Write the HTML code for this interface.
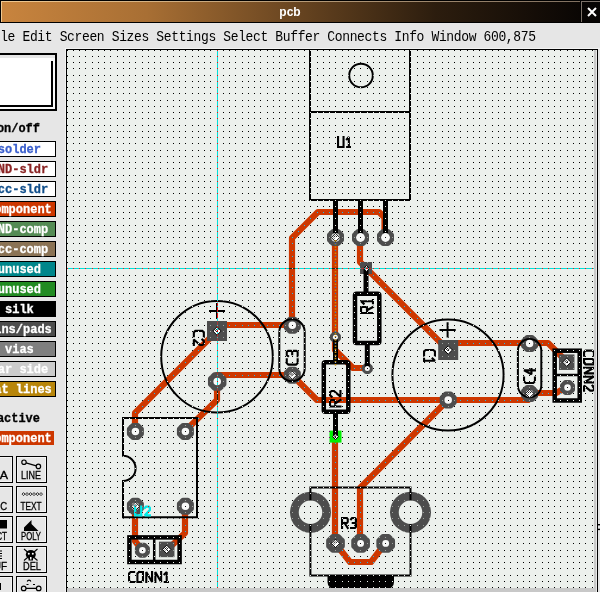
<!DOCTYPE html><html><head><meta charset="utf-8"><style>
html,body{margin:0;padding:0;width:600px;height:592px;overflow:hidden;background:#e6e6e6}
svg{position:absolute;left:0;top:0;display:block;will-change:transform}
.mono{font-family:"Liberation Mono",monospace}
.lbl{font-family:"Liberation Mono",monospace;font-weight:bold;font-size:12px;stroke:currentColor;stroke-width:0.3}
</style></head><body>
<svg width="600" height="592" viewBox="0 0 600 592">
<defs>
<linearGradient id="tg" x1="0" y1="0" x2="1" y2="0"><stop offset="0" stop-color="#c8843e"/><stop offset="0.25" stop-color="#a86f34"/><stop offset="0.5" stop-color="#6a4621"/><stop offset="0.75" stop-color="#2c1d0e"/><stop offset="1" stop-color="#0a0604"/></linearGradient>
<linearGradient id="th" x1="0" y1="0" x2="1" y2="0"><stop offset="0" stop-color="#f0c890"/><stop offset="1" stop-color="#807060"/></linearGradient>
<pattern id="grid" x="73" y="56" width="25" height="25" patternUnits="userSpaceOnUse"><rect fill="#ecf0ec" x="0" y="0" width="1" height="1"/><rect fill="#ecf0ec" x="0" y="6" width="1" height="1"/><rect fill="#ecf0ec" x="0" y="12" width="1" height="1"/><rect fill="#ecf0ec" x="0" y="19" width="1" height="1"/><rect fill="#ecf0ec" x="6" y="0" width="1" height="1"/><rect fill="#ecf0ec" x="6" y="6" width="1" height="1"/><rect fill="#ecf0ec" x="6" y="12" width="1" height="1"/><rect fill="#ecf0ec" x="6" y="19" width="1" height="1"/><rect fill="#ecf0ec" x="12" y="0" width="1" height="1"/><rect fill="#ecf0ec" x="12" y="6" width="1" height="1"/><rect fill="#ecf0ec" x="12" y="12" width="1" height="1"/><rect fill="#ecf0ec" x="12" y="19" width="1" height="1"/><rect fill="#ecf0ec" x="19" y="0" width="1" height="1"/><rect fill="#ecf0ec" x="19" y="6" width="1" height="1"/><rect fill="#ecf0ec" x="19" y="12" width="1" height="1"/><rect fill="#ecf0ec" x="19" y="19" width="1" height="1"/></pattern>
<clipPath id="cc"><rect x="67" y="50" width="527" height="538"/></clipPath>
</defs>
<rect x="0" y="0" width="600" height="23" fill="#000"/>
<rect x="1" y="1" width="579" height="21" fill="url(#th)"/>
<rect x="2" y="2" width="578" height="20" fill="url(#tg)"/>
<rect x="581" y="1" width="19" height="21" fill="#7a7068"/>
<rect x="582" y="2" width="18" height="20" fill="#060403"/>
<path d="M588 8L596 16M596 8L588 16" stroke="#fff" stroke-width="2"/>
<text x="290" y="16" text-anchor="middle" fill="#fff" font-family="Liberation Sans" font-weight="bold" font-size="12">pcb</text>
<text class="mono" transform="translate(0 40.6) scale(1 1.1)" x="-14.7" y="0" font-size="13" letter-spacing="-0.36" fill="#000" xml:space="preserve">File Edit Screen Sizes Settings Select Buffer Connects Info Window 600,875</text>
<rect x="-10" y="53" width="67" height="58" fill="#000"/>
<rect x="-10" y="55" width="65" height="54" fill="#e6e6e6"/>
<rect x="-10" y="58" width="65" height="51" fill="#fafafa"/>
<rect x="-10" y="61" width="63" height="46" fill="#000"/>
<rect x="-10" y="58" width="61" height="47" fill="#fff"/>
<text class="lbl" x="18.4" y="132" text-anchor="middle" fill="#000" color="#000" textLength="43" lengthAdjust="spacingAndGlyphs">on/off</text>
<rect x="-10" y="141" width="66" height="16" fill="#000"/>
<rect x="-10" y="142" width="65" height="14" fill="#fff"/>
<text class="lbl" x="19.4" y="152.7" text-anchor="middle" fill="#3a5fcd" color="#3a5fcd" xml:space="preserve" textLength="43.2" lengthAdjust="spacingAndGlyphs">solder</text>
<rect x="-10" y="161" width="66" height="16" fill="#000"/>
<rect x="-10" y="162" width="65" height="14" fill="#fff"/>
<text class="lbl" x="19.4" y="172.7" text-anchor="middle" fill="#8b2323" color="#8b2323" xml:space="preserve" textLength="57.6" lengthAdjust="spacingAndGlyphs">GND-sldr</text>
<rect x="-10" y="181" width="66" height="16" fill="#000"/>
<rect x="-10" y="182" width="65" height="14" fill="#fff"/>
<text class="lbl" x="19.4" y="192.7" text-anchor="middle" fill="#104e8b" color="#104e8b" xml:space="preserve" textLength="57.6" lengthAdjust="spacingAndGlyphs">Vcc-sldr</text>
<rect x="-10" y="201" width="66" height="16" fill="#000"/>
<rect x="-10" y="202" width="65" height="14" fill="#cd3700"/>
<text class="lbl" x="19.4" y="212.7" text-anchor="middle" fill="#fff" color="#fff" xml:space="preserve" textLength="64.8" lengthAdjust="spacingAndGlyphs">component</text>
<rect x="-10" y="221" width="66" height="16" fill="#000"/>
<rect x="-10" y="222" width="65" height="14" fill="#548b54"/>
<text class="lbl" x="19.4" y="232.7" text-anchor="middle" fill="#fff" color="#fff" xml:space="preserve" textLength="57.6" lengthAdjust="spacingAndGlyphs">GND-comp</text>
<rect x="-10" y="241" width="66" height="16" fill="#000"/>
<rect x="-10" y="242" width="65" height="14" fill="#8b7355"/>
<text class="lbl" x="19.4" y="252.7" text-anchor="middle" fill="#fff" color="#fff" xml:space="preserve" textLength="57.6" lengthAdjust="spacingAndGlyphs">Vcc-comp</text>
<rect x="-10" y="261" width="66" height="16" fill="#000"/>
<rect x="-10" y="262" width="65" height="14" fill="#00868b"/>
<text class="lbl" x="19.4" y="272.7" text-anchor="middle" fill="#fff" color="#fff" xml:space="preserve" textLength="43.2" lengthAdjust="spacingAndGlyphs">unused</text>
<rect x="-10" y="281" width="66" height="16" fill="#000"/>
<rect x="-10" y="282" width="65" height="14" fill="#228b22"/>
<text class="lbl" x="19.4" y="292.7" text-anchor="middle" fill="#fff" color="#fff" xml:space="preserve" textLength="43.2" lengthAdjust="spacingAndGlyphs">unused</text>
<rect x="-10" y="301" width="66" height="16" fill="#000"/>
<rect x="-10" y="302" width="65" height="14" fill="#000"/>
<text class="lbl" x="19.4" y="312.7" text-anchor="middle" fill="#fff" color="#fff" xml:space="preserve" textLength="28.8" lengthAdjust="spacingAndGlyphs">silk</text>
<rect x="-10" y="321" width="66" height="16" fill="#000"/>
<rect x="-10" y="322" width="65" height="14" fill="#4d4d4d"/>
<text class="lbl" x="19.4" y="332.7" text-anchor="middle" fill="#fff" color="#fff" xml:space="preserve" textLength="64.8" lengthAdjust="spacingAndGlyphs">pins/pads</text>
<rect x="-10" y="341" width="66" height="16" fill="#000"/>
<rect x="-10" y="342" width="65" height="14" fill="#7f7f7f"/>
<text class="lbl" x="19.4" y="352.7" text-anchor="middle" fill="#fff" color="#fff" xml:space="preserve" textLength="28.8" lengthAdjust="spacingAndGlyphs">vias</text>
<rect x="-10" y="361" width="66" height="16" fill="#000"/>
<rect x="-10" y="362" width="65" height="14" fill="#cccccc"/>
<text class="lbl" x="19.4" y="372.7" text-anchor="middle" fill="#fff" color="#fff" xml:space="preserve" textLength="57.6" lengthAdjust="spacingAndGlyphs">far side</text>
<rect x="-10" y="381" width="66" height="16" fill="#000"/>
<rect x="-10" y="382" width="65" height="14" fill="#b8860b"/>
<text class="lbl" x="19.4" y="392.7" text-anchor="middle" fill="#fff" color="#fff" xml:space="preserve" textLength="64.8" lengthAdjust="spacingAndGlyphs">rat lines</text>
<text class="lbl" x="18.4" y="422" text-anchor="middle" fill="#000" color="#000" textLength="43" lengthAdjust="spacingAndGlyphs">active</text>
<rect x="-10" y="431" width="64" height="14" fill="#cd3700"/>
<text class="lbl" x="19.4" y="442" text-anchor="middle" fill="#fff" color="#fff" textLength="64.8" lengthAdjust="spacingAndGlyphs">component</text>
<rect x="-18" y="456" width="31" height="27" fill="#000"/>
<rect x="-17" y="457" width="29" height="25" fill="#f4f4f4"/>
<rect x="-16" y="458" width="27" height="23" fill="#e6e6e6"/>
<rect x="16" y="456" width="31" height="27" fill="#000"/>
<rect x="17" y="457" width="29" height="25" fill="#f4f4f4"/>
<rect x="18" y="458" width="27" height="23" fill="#e6e6e6"/>
<rect x="-18" y="486" width="31" height="27" fill="#000"/>
<rect x="-17" y="487" width="29" height="25" fill="#f4f4f4"/>
<rect x="-16" y="488" width="27" height="23" fill="#e6e6e6"/>
<rect x="16" y="486" width="31" height="27" fill="#000"/>
<rect x="17" y="487" width="29" height="25" fill="#f4f4f4"/>
<rect x="18" y="488" width="27" height="23" fill="#e6e6e6"/>
<rect x="-18" y="516" width="31" height="27" fill="#000"/>
<rect x="-17" y="517" width="29" height="25" fill="#f4f4f4"/>
<rect x="-16" y="518" width="27" height="23" fill="#e6e6e6"/>
<rect x="16" y="516" width="31" height="27" fill="#000"/>
<rect x="17" y="517" width="29" height="25" fill="#f4f4f4"/>
<rect x="18" y="518" width="27" height="23" fill="#e6e6e6"/>
<rect x="-18" y="546" width="31" height="27" fill="#000"/>
<rect x="-17" y="547" width="29" height="25" fill="#f4f4f4"/>
<rect x="-16" y="548" width="27" height="23" fill="#e6e6e6"/>
<rect x="16" y="546" width="31" height="27" fill="#000"/>
<rect x="17" y="547" width="29" height="25" fill="#f4f4f4"/>
<rect x="18" y="548" width="27" height="23" fill="#e6e6e6"/>
<rect x="-18" y="576" width="31" height="27" fill="#000"/>
<rect x="-17" y="577" width="29" height="25" fill="#f4f4f4"/>
<rect x="-16" y="578" width="27" height="23" fill="#e6e6e6"/>
<rect x="16" y="576" width="31" height="27" fill="#000"/>
<rect x="17" y="577" width="29" height="25" fill="#f4f4f4"/>
<rect x="18" y="578" width="27" height="23" fill="#e6e6e6"/>
<text x="31" y="479" font-family="Liberation Sans" font-size="10.6" fill="#000" stroke="#000" stroke-width="0.3" text-anchor="middle" textLength="20" lengthAdjust="spacingAndGlyphs">LINE</text>
<text x="31" y="510" font-family="Liberation Sans" font-size="10.6" fill="#000" stroke="#000" stroke-width="0.3" text-anchor="middle" textLength="21" lengthAdjust="spacingAndGlyphs">TEXT</text>
<text x="31" y="540" font-family="Liberation Sans" font-size="10.6" fill="#000" stroke="#000" stroke-width="0.3" text-anchor="middle" textLength="20" lengthAdjust="spacingAndGlyphs">POLY</text>
<text x="32" y="570" font-family="Liberation Sans" font-size="10.6" fill="#000" stroke="#000" stroke-width="0.3" text-anchor="middle" textLength="18" lengthAdjust="spacingAndGlyphs">DEL</text>
<text x="-2" y="479" font-family="Liberation Sans" font-size="10.6" fill="#000" stroke="#000" stroke-width="0.3" text-anchor="middle" textLength="20" lengthAdjust="spacingAndGlyphs">VIA</text>
<text x="-3" y="510" font-family="Liberation Sans" font-size="10.6" fill="#000" stroke="#000" stroke-width="0.3" text-anchor="middle" textLength="20" lengthAdjust="spacingAndGlyphs">ARC</text>
<text x="-4" y="540" font-family="Liberation Sans" font-size="10.6" fill="#000" stroke="#000" stroke-width="0.3" text-anchor="middle" textLength="22" lengthAdjust="spacingAndGlyphs">RECT</text>
<text x="-3" y="570" font-family="Liberation Sans" font-size="10.6" fill="#000" stroke="#000" stroke-width="0.3" text-anchor="middle" textLength="20" lengthAdjust="spacingAndGlyphs">BUF</text>
<g fill="none" stroke="#000" stroke-width="1.2"><circle cx="24" cy="462.2" r="2.2"/><circle cx="38.4" cy="466.4" r="2.2"/><path d="M26 462.8L36.3 465.8"/></g>
<path d="M23.5 492.6l1.5 1.5l-1.5 1.5l-1.5-1.5z" fill="none" stroke="#000" stroke-width="0.8"/>
<path d="M27.0 492.6l1.5 1.5l-1.5 1.5l-1.5-1.5z" fill="none" stroke="#000" stroke-width="0.8"/>
<path d="M30.5 492.6l1.5 1.5l-1.5 1.5l-1.5-1.5z" fill="none" stroke="#000" stroke-width="0.8"/>
<path d="M34.0 492.6l1.5 1.5l-1.5 1.5l-1.5-1.5z" fill="none" stroke="#000" stroke-width="0.8"/>
<path d="M37.5 492.6l1.5 1.5l-1.5 1.5l-1.5-1.5z" fill="none" stroke="#000" stroke-width="0.8"/>
<path d="M41.0 492.6l1.5 1.5l-1.5 1.5l-1.5-1.5z" fill="none" stroke="#000" stroke-width="0.8"/>
<path d="M24 531V527.5L31.5 520V524L38.5 531Z" fill="#000"/>
<rect x="-4" y="520" width="11" height="8.5" fill="#000"/>
<g stroke="#000" stroke-width="1.1"><path d="M24 549L37.5 560.5M37.5 549L24 560.5"/></g>
<ellipse cx="30.8" cy="554.5" rx="5" ry="4.5" fill="#000"/><rect x="28.5" y="556" width="4.5" height="4.5" fill="#000"/>
<circle cx="28.8" cy="553.8" r="1" fill="#fff"/><circle cx="32.8" cy="553.8" r="1" fill="#fff"/><rect x="30" y="557" width="1.5" height="2.5" fill="#fff"/>
<g fill="none" stroke="#000" stroke-width="1.2"><circle cx="23.7" cy="588.4" r="2.3"/><circle cx="38.7" cy="588.4" r="2.3"/><path d="M26 588.4H36.4M26.5 584.5h2M33 584.5h2"/><path d="M27.3 581.5a1.8 1.8 0 0 1 3.5 0"/></g>
<rect x="-2" y="583" width="3" height="7" fill="#000"/>
<g stroke="#000" stroke-width="1"><path d="M-3 551h5M-3 553.5h5M-3 556h5M-3 558.5h5"/></g>
<rect x="65" y="48" width="535" height="544" fill="#f3f3f3"/>
<rect x="66" y="49" width="532" height="543" fill="#000"/>
<rect x="67" y="50" width="530" height="542" fill="#c8c8c8"/>
<rect x="67" y="50" width="527" height="538" fill="#ecf0ec"/>
<rect x="596" y="50" width="1" height="542" fill="#e8e8e8"/>
<rect x="598" y="49" width="2" height="543" fill="#e6e6e6"/>
<g clip-path="url(#cc)">
<rect x="67" y="50" width="527" height="538" fill="#ecf0ec"/>
<g fill="none" stroke="#cd3700" stroke-width="6.2" stroke-linecap="round" stroke-linejoin="round">
<path d="M292 325V238L318 212H379L384.5 217.5V238M335 238V350L353 368H367M360 238V262L366 268M366 268L448 350M448 343H548L567 362M217 325H292M217 331L135 413V431M217 381V400L185 431M217 375H292M292 375L317 400H528M529 393H556L567 387M448 400L360 488V543M335 437V543M335 543L350 562H371L385.5 543M135 506V541L142 550M185 506V533L167 550"/>
</g>
<path fill="#4d4d4d" stroke="#4d4d4d" stroke-width="5" stroke-linejoin="round" d="M341.50 239.99L337.99 243.50L333.01 243.50L329.50 239.99L329.50 235.01L333.01 231.50L337.99 231.50L341.50 235.01ZM366.50 239.99L362.99 243.50L358.01 243.50L354.50 239.99L354.50 235.01L358.01 231.50L362.99 231.50L366.50 235.01ZM391.50 239.99L387.99 243.50L383.01 243.50L379.50 239.99L379.50 235.01L383.01 231.50L387.99 231.50L391.50 235.01ZM298.30 327.79L294.79 331.30L289.81 331.30L286.30 327.79L286.30 322.81L289.81 319.30L294.79 319.30L298.30 322.81ZM298.30 377.79L294.79 381.30L289.81 381.30L286.30 377.79L286.30 372.81L289.81 369.30L294.79 369.30L298.30 372.81ZM535.60 346.09L532.09 349.60L527.11 349.60L523.60 346.09L523.60 341.11L527.11 337.60L532.09 337.60L535.60 341.11ZM535.60 395.99L532.09 399.50L527.11 399.50L523.60 395.99L523.60 391.01L527.11 387.50L532.09 387.50L535.60 391.01ZM141.40 433.99L137.89 437.50L132.91 437.50L129.40 433.99L129.40 429.01L132.91 425.50L137.89 425.50L141.40 429.01ZM191.40 433.99L187.89 437.50L182.91 437.50L179.40 433.99L179.40 429.01L182.91 425.50L187.89 425.50L191.40 429.01ZM141.40 508.79L137.89 512.30L132.91 512.30L129.40 508.79L129.40 503.81L132.91 500.30L137.89 500.30L141.40 503.81ZM191.40 508.79L187.89 512.30L182.91 512.30L179.40 508.79L179.40 503.81L182.91 500.30L187.89 500.30L191.40 503.81ZM454.20 402.49L450.69 406.00L445.71 406.00L442.20 402.49L442.20 397.51L445.71 394.00L450.69 394.00L454.20 397.51ZM223.95 384.30L220.00 388.25L214.40 388.25L210.45 384.30L210.45 378.70L214.40 374.75L220.00 374.75L223.95 378.70ZM342.35 546.24L338.34 550.25L332.66 550.25L328.65 546.24L328.65 540.56L332.66 536.55L338.34 536.55L342.35 540.56ZM367.45 546.24L363.44 550.25L357.76 550.25L353.75 546.24L353.75 540.56L357.76 536.55L363.44 536.55L367.45 540.56ZM392.55 546.24L388.54 550.25L382.86 550.25L378.85 546.24L378.85 540.56L382.86 536.55L388.54 536.55L392.55 540.56ZM147.40 552.37L144.47 555.30L140.33 555.30L137.40 552.37L137.40 548.23L140.33 545.30L144.47 545.30L147.40 548.23ZM572.50 389.67L569.57 392.60L565.43 392.60L562.50 389.67L562.50 385.53L565.43 382.60L569.57 382.60L572.50 385.53ZM338.40 338.44L336.64 340.20L334.16 340.20L332.40 338.44L332.40 335.96L334.16 334.20L336.64 334.20L338.40 335.96ZM370.30 369.64L368.54 371.40L366.06 371.40L364.30 369.64L364.30 367.16L366.06 365.40L368.54 365.40L370.30 367.16Z"/>
<circle cx="310.50" cy="512.30" r="20.50" fill="#4d4d4d"/>
<circle cx="410.50" cy="512.30" r="20.50" fill="#4d4d4d"/>
<rect x="207.00" y="321.00" width="20.00" height="20.00" fill="#4d4d4d"/>
<rect x="438.20" y="340.00" width="20.00" height="20.00" fill="#4d4d4d"/>
<rect x="360.00" y="262.00" width="12.00" height="12.00" fill="#4d4d4d"/>
<rect x="329.50" y="430.60" width="12.00" height="12.00" fill="#00f000"/>
<rect x="158.95" y="541.65" width="15.50" height="15.50" fill="#4d4d4d"/>
<rect x="558.95" y="354.45" width="15.50" height="15.50" fill="#4d4d4d"/>
<g fill="none" stroke="#000" stroke-width="2.00">
<path d="M310 40V200H410V40M310 112H410"/>
<circle cx="361" cy="75.5" r="11.8"/>
<path d="M279.3 332A12.7 12.7 0 0 1 304.7 332V368.5A12.7 12.7 0 0 1 279.3 368.5Z"/>
<path d="M517.9 350.6A11.7 11.7 0 0 1 541.3 350.6V385.6A11.7 11.7 0 0 1 517.9 385.6Z"/>
<circle cx="217" cy="356.7" r="55.8"/>
<circle cx="448" cy="375" r="55.6"/>
<path d="M123 418H197V517.3H123V481A12.6 12.6 0 0 0 123 455.8Z"/>
<path d="M310.4 487.5H410.5V575.5H310.4Z"/>
<path d="M217 303V319M209 311H225M447.6 322.3V337.5M439.5 330H455.7"/>
</g>
<g stroke="#000" stroke-width="5">
<path d="M335.5 200V238M360.5 200V238M385.5 200V238M366 268V292M367.3 343V368M335.5 337V362M335.5 412V437"/>
</g>
<g fill="none" stroke="#000" stroke-width="4.5">
<rect x="355" y="293.8" width="24.3" height="49.3" rx="1.5"/>
<rect x="323.8" y="362.3" width="24.5" height="49.5" rx="1.5"/>
<rect x="129.4" y="537.4" width="50.2" height="24.6"/>
<rect x="554.7" y="350.7" width="25" height="49.8"/>
</g>
<path d="M154.2 537V562M554 375H581" stroke="#000" stroke-width="2.5"/>
<path d="M327.5 575H394V582A7 7 0 0 1 387 589H334.5A7 7 0 0 1 327.5 582Z" fill="#000"/>
<path transform="translate(344.00 142.00)" d="M-5.95 -4.95L-5.95 4.95L-0.46 4.95L-0.46 -4.95M2.84 -2.77L4.86 -4.95L4.86 4.95M3.15 4.95L5.95 4.95" fill="none" stroke="#000" stroke-width="2.10" stroke-linecap="square" stroke-linejoin="miter" stroke-miterlimit="1.6"/>
<path transform="translate(349.00 523.00)" d="M-6.95 4.95L-6.95 -4.95L-2.11 -4.95L-1.25 -3.76L-1.25 -1.19L-2.11 0.00L-6.95 0.00M-4.38 0.00L-1.25 4.95M2.05 -3.76L3.03 -4.95L5.97 -4.95L6.95 -3.76L6.95 -0.99L5.97 0.00L3.76 0.00M5.97 0.00L6.95 0.99L6.95 3.76L5.97 4.95L2.05 4.95" fill="none" stroke="#000" stroke-width="2.10" stroke-linecap="square" stroke-linejoin="miter" stroke-miterlimit="1.6"/>
<path transform="translate(148.50 577.00)" d="M-14.39 -4.95L-17.93 -4.95L-19.45 -3.46L-19.45 3.47L-17.93 4.95L-14.39 4.95M-9.42 -4.95L-5.52 -4.95L-5.52 3.47L-7.19 4.95L-11.09 4.95L-11.09 -3.46L-9.42 -4.95M-2.22 4.95L-2.22 -4.95L3.55 4.95L3.55 -4.95M6.85 4.95L6.85 -4.95L12.63 4.95L12.63 -4.95M15.93 -2.77L18.22 -4.95L18.22 4.95M16.28 4.95L19.45 4.95" fill="none" stroke="#000" stroke-width="2.10" stroke-linecap="square" stroke-linejoin="miter" stroke-miterlimit="1.6"/>
<path transform="translate(292.20 357.75) rotate(-90)" d="M-1.65 -5.45L-5.32 -5.45L-6.90 -3.82L-6.90 3.82L-5.32 5.45L-1.65 5.45M1.65 -4.14L2.70 -5.45L5.85 -5.45L6.90 -4.14L6.90 -1.09L5.85 0.00L3.49 0.00M5.85 0.00L6.90 1.09L6.90 4.14L5.85 5.45L1.65 5.45" fill="none" stroke="#000" stroke-width="2.10" stroke-linecap="square" stroke-linejoin="miter" stroke-miterlimit="1.6"/>
<path transform="translate(198.85 337.90) rotate(90)" d="M-1.65 -5.00L-5.43 -5.00L-7.05 -3.50L-7.05 3.50L-5.43 5.00L-1.65 5.00M1.65 -3.50L3.00 -5.00L5.97 -5.00L7.05 -3.50L7.05 -1.20L1.65 5.00L7.05 5.00" fill="none" stroke="#000" stroke-width="2.10" stroke-linecap="square" stroke-linejoin="miter" stroke-miterlimit="1.6"/>
<path transform="translate(367.00 306.50) rotate(-90)" d="M-6.45 5.95L-6.45 -5.95L-1.36 -5.95L-0.46 -4.52L-0.46 -1.43L-1.36 0.00L-6.45 0.00M-3.75 0.00L-0.46 5.95M2.84 -3.33L5.19 -5.95L5.19 5.95M3.20 5.95L6.45 5.95" fill="none" stroke="#000" stroke-width="2.10" stroke-linecap="square" stroke-linejoin="miter" stroke-miterlimit="1.6"/>
<path transform="translate(335.25 398.75) rotate(-90)" d="M-7.70 5.20L-7.70 -5.20L-2.18 -5.20L-1.21 -3.95L-1.21 -1.25L-2.18 0.00L-7.70 0.00M-4.78 0.00L-1.21 5.20M2.09 -3.64L3.49 -5.20L6.58 -5.20L7.70 -3.64L7.70 -1.25L2.09 5.20L7.70 5.20" fill="none" stroke="#000" stroke-width="2.10" stroke-linecap="square" stroke-linejoin="miter" stroke-miterlimit="1.6"/>
<path transform="translate(429.50 356.00) rotate(90)" d="M-0.88 -5.45L-4.43 -5.45L-5.95 -3.82L-5.95 3.82L-4.43 5.45L-0.88 5.45M2.42 -3.05L4.71 -5.45L4.71 5.45M2.77 5.45L5.95 5.45" fill="none" stroke="#000" stroke-width="2.10" stroke-linecap="square" stroke-linejoin="miter" stroke-miterlimit="1.6"/>
<path transform="translate(529.50 376.00) rotate(-90)" d="M-1.65 -5.45L-5.36 -5.45L-6.95 -3.82L-6.95 3.82L-5.36 5.45L-1.65 5.45M5.62 5.45L5.62 -5.45L1.65 1.96L6.95 1.96" fill="none" stroke="#000" stroke-width="2.10" stroke-linecap="square" stroke-linejoin="miter" stroke-miterlimit="1.6"/>
<path transform="translate(589.00 370.65) rotate(90)" d="M-15.02 -4.95L-18.51 -4.95L-20.00 -3.46L-20.00 3.47L-18.51 4.95L-15.02 4.95M-10.08 -4.95L-6.24 -4.95L-6.24 3.47L-7.89 4.95L-11.72 4.95L-11.72 -3.46L-10.08 -4.95M-2.94 4.95L-2.94 -4.95L2.74 4.95L2.74 -4.95M6.04 4.95L6.04 -4.95L11.72 4.95L11.72 -4.95M15.02 -3.46L16.27 -4.95L19.00 -4.95L20.00 -3.46L20.00 -1.19L15.02 4.95L20.00 4.95" fill="none" stroke="#000" stroke-width="2.10" stroke-linecap="square" stroke-linejoin="miter" stroke-miterlimit="1.6"/>
<circle cx="335.50" cy="237.50" r="4.40" fill="#f8f9f8"/>
<circle cx="360.50" cy="237.50" r="4.40" fill="#f8f9f8"/>
<circle cx="385.50" cy="237.50" r="4.40" fill="#f8f9f8"/>
<circle cx="292.30" cy="325.30" r="3.75" fill="#f8f9f8"/>
<circle cx="292.30" cy="375.30" r="3.75" fill="#f8f9f8"/>
<circle cx="529.60" cy="343.60" r="3.75" fill="#f8f9f8"/>
<circle cx="529.60" cy="393.50" r="3.75" fill="#f8f9f8"/>
<circle cx="135.40" cy="431.50" r="3.75" fill="#f8f9f8"/>
<circle cx="185.40" cy="431.50" r="3.75" fill="#f8f9f8"/>
<circle cx="135.40" cy="506.30" r="3.75" fill="#f8f9f8"/>
<circle cx="185.40" cy="506.30" r="3.75" fill="#f8f9f8"/>
<circle cx="448.20" cy="400.00" r="3.75" fill="#f8f9f8"/>
<circle cx="217.20" cy="381.50" r="3.80" fill="#f8f9f8"/>
<circle cx="335.50" cy="543.40" r="3.40" fill="#f8f9f8"/>
<circle cx="360.60" cy="543.40" r="3.40" fill="#f8f9f8"/>
<circle cx="385.70" cy="543.40" r="3.40" fill="#f8f9f8"/>
<circle cx="142.40" cy="550.30" r="3.25" fill="#f8f9f8"/>
<circle cx="567.50" cy="387.60" r="3.25" fill="#f8f9f8"/>
<circle cx="335.40" cy="337.20" r="2.50" fill="#f8f9f8"/>
<circle cx="367.30" cy="368.40" r="2.50" fill="#f8f9f8"/>
<circle cx="310.50" cy="512.30" r="11.75" fill="#ecf0ec"/>
<circle cx="410.50" cy="512.30" r="11.75" fill="#ecf0ec"/>
<path d="M335.50 233.30l4.20 4.20l-4.20 4.20l-4.20 -4.20z" fill="#fff" stroke="#000" stroke-width="1"/><path d="M333.40 237.50l2.10 -2.10M334.45 238.55l2.62 -2.62" stroke="#000" stroke-width="0.9"/>
<path d="M366.50 265.56l2.94 2.94l-2.94 2.94l-2.94 -2.94z" fill="#fff" stroke="#000" stroke-width="1"/><path d="M365.03 268.50l1.47 -1.47M365.76 269.24l1.84 -1.84" stroke="#000" stroke-width="0.9"/>
<path d="M217.00 326.80l4.20 4.20l-4.20 4.20l-4.20 -4.20z" fill="#fff" stroke="#000" stroke-width="1"/><path d="M214.90 331.00l2.10 -2.10M215.95 332.05l2.62 -2.62" stroke="#000" stroke-width="0.9"/>
<path d="M448.20 345.80l4.20 4.20l-4.20 4.20l-4.20 -4.20z" fill="#fff" stroke="#000" stroke-width="1"/><path d="M446.10 350.00l2.10 -2.10M447.15 351.05l2.62 -2.62" stroke="#000" stroke-width="0.9"/>
<path d="M292.30 371.10l4.20 4.20l-4.20 4.20l-4.20 -4.20z" fill="#fff" stroke="#000" stroke-width="1"/><path d="M290.20 375.30l2.10 -2.10M291.25 376.35l2.62 -2.62" stroke="#000" stroke-width="0.9"/>
<path d="M529.60 389.30l4.20 4.20l-4.20 4.20l-4.20 -4.20z" fill="#fff" stroke="#000" stroke-width="1"/><path d="M527.50 393.50l2.10 -2.10M528.55 394.55l2.62 -2.62" stroke="#000" stroke-width="0.9"/>
<path d="M566.70 358.00l4.20 4.20l-4.20 4.20l-4.20 -4.20z" fill="#fff" stroke="#000" stroke-width="1"/><path d="M564.60 362.20l2.10 -2.10M565.65 363.25l2.62 -2.62" stroke="#000" stroke-width="0.9"/>
<path d="M135.40 502.10l4.20 4.20l-4.20 4.20l-4.20 -4.20z" fill="#fff" stroke="#000" stroke-width="1"/><path d="M133.30 506.30l2.10 -2.10M134.35 507.35l2.62 -2.62" stroke="#000" stroke-width="0.9"/>
<path d="M166.70 545.20l4.20 4.20l-4.20 4.20l-4.20 -4.20z" fill="#fff" stroke="#000" stroke-width="1"/><path d="M164.60 549.40l2.10 -2.10M165.65 550.45l2.62 -2.62" stroke="#000" stroke-width="0.9"/>
<path d="M335.50 539.20l4.20 4.20l-4.20 4.20l-4.20 -4.20z" fill="#fff" stroke="#000" stroke-width="1"/><path d="M333.40 543.40l2.10 -2.10M334.45 544.45l2.62 -2.62" stroke="#000" stroke-width="0.9"/>
<path d="M335.50 433.66l2.94 2.94l-2.94 2.94l-2.94 -2.94z" fill="#fff" stroke="#000" stroke-width="1"/><path d="M334.03 436.60l1.47 -1.47M334.76 437.34l1.84 -1.84" stroke="#000" stroke-width="0.9"/>
<path transform="translate(142.50 511.00)" d="M-7.35 -4.35L-7.35 4.35L-1.22 4.35L-1.22 -4.35M2.28 -3.04L3.55 -4.35L6.34 -4.35L7.35 -3.04L7.35 -1.04L2.28 4.35L7.35 4.35" fill="none" stroke="#00e8e8" stroke-width="2.30" stroke-linecap="square" stroke-linejoin="miter" stroke-miterlimit="1.6"/>
<path d="M335.5 240V367" stroke="#c8900c" stroke-width="1.6" stroke-dasharray="1.5 1.6"/>
<path d="M217.5 50V588M67 268.5H594" stroke="#ec0f13" stroke-width="1" style="mix-blend-mode:difference"/>
<rect x="67" y="50" width="527" height="538" fill="url(#grid)" style="mix-blend-mode:difference"/>
</g>
<rect x="598" y="524" width="2" height="1.4" fill="#000"/><rect x="598" y="528.7" width="2" height="1.4" fill="#000"/>
</svg></body></html>
